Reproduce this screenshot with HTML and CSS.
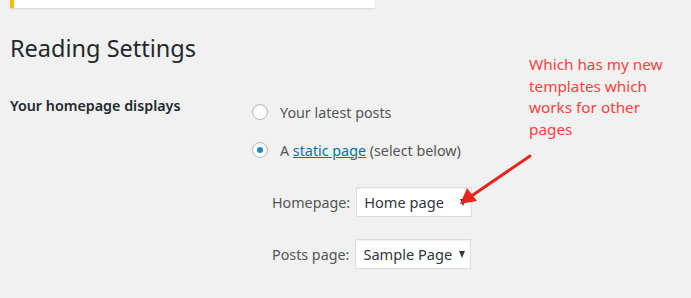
FILE: index.html
```html
<!DOCTYPE html>
<html>

<head>
    <link rel="stylesheet" href="styles.css">
</head>

<body>

    <div class="notice"></div>

    <div class="wrap">
        <h1>Reading Settings</h1>

        <div class="form-row">
            <div class="row-label">Your homepage displays</div>
            <div class="row-field">
                <label class="radio-line">
                    <span class="radio"></span>
                    Your latest posts
                </label>
                <label class="radio-line">
                    <span class="radio checked"></span>
                    A&nbsp;<a href="#">static page</a>&nbsp;(select below)
                </label>

                <div class="select-list">
                    <div class="select-line">
                        <span class="select-label">Homepage:</span>
                        <span class="select-box">Home page <span class="caret"></span></span>
                    </div>
                    <div class="select-line">
                        <span class="select-label">Posts page:</span>
                        <span class="select-box">Sample Page <span class="caret"></span></span>
                    </div>
                </div>
            </div>
        </div>
    </div>

    <!-- annotation drawn over the screenshot -->
    <div class="note">Which has my new templates which works for other pages</div>
    <svg class="note-arrow" width="691" height="298" viewBox="0 0 691 298">
        <line x1="530" y1="156" x2="470" y2="197" stroke="#e8261f" stroke-width="3" stroke-linecap="round" />
        <polygon points="460,204 467,188 477,201" fill="#e8261f" />
    </svg>

</body>

</html>
```

FILE: styles.css
```css
body {
    margin: 0;
    background-color: #f1f1f1;
    font-family: "Noto Sans", "Open Sans", sans-serif;
    color: #444;
}

.notice {
    margin-left: 10px;
    width: 361px;
    height: 8px;
    background-color: #fff;
    border-left: 4px solid #ffb900;
    box-shadow: 0 1px 2px rgba(0, 0, 0, 0.12);
}

.wrap {
    padding-left: 10px;
}

h1 {
    margin: 0;
    padding-top: 23px;
    font-size: 23.5px;
    font-weight: 400;
    line-height: 34px;
    color: #23282d;
}

.form-row {
    display: flex;
    margin-top: 31px;
}

.row-label {
    width: 242px;
    font-size: 14.3px;
    font-weight: 600;
    color: #23282d;
    line-height: 20px;
}

.row-field {
    display: flex;
    flex-direction: column;
    padding-top: 6px;
    font-size: 14.3px;
}

.radio-line {
    display: flex;
    align-items: center;
    height: 20px;
    margin-bottom: 18px;
    color: #555;
    white-space: nowrap;
}

.radio {
    width: 14px;
    height: 14px;
    border: 1px solid #b4b9be;
    border-radius: 50%;
    background-color: #fff;
    margin-right: 12px;
    display: flex;
    align-items: center;
    justify-content: center;
    box-shadow: inset 0 1px 2px rgba(0, 0, 0, 0.07);
}

.radio.checked::after {
    content: "";
    width: 6px;
    height: 6px;
    border-radius: 50%;
    background-color: #1e8cbe;
}

.radio-line a {
    color: #0073aa;
}

.select-list {
    margin-top: 9px;
    margin-left: 20px;
}

.select-line {
    display: flex;
    align-items: center;
    margin-bottom: 22px;
}

.select-label {
    color: #555;
    margin-right: 6px;
}

.select-box {
    display: flex;
    align-items: center;
    justify-content: space-between;
    box-sizing: border-box;
    width: 116px;
    height: 30px;
    padding: 0 5px 0 7px;
    background-color: #fff;
    border: 1px solid #ddd;
    box-shadow: inset 0 1px 2px rgba(0, 0, 0, 0.07);
    color: #32373c;
    font-size: 14.6px;
    white-space: nowrap;
}

.caret {
    width: 0;
    height: 0;
    border-left: 3.5px solid transparent;
    border-right: 3.5px solid transparent;
    border-top: 7px solid #32373c;
    margin-top: 1px;
}

.note {
    position: absolute;
    left: 529px;
    top: 54px;
    width: 150px;
    font-size: 15.3px;
    line-height: 21.7px;
    color: #ff4040;
}

.note-arrow {
    position: absolute;
    left: 0;
    top: 0;
}
```
